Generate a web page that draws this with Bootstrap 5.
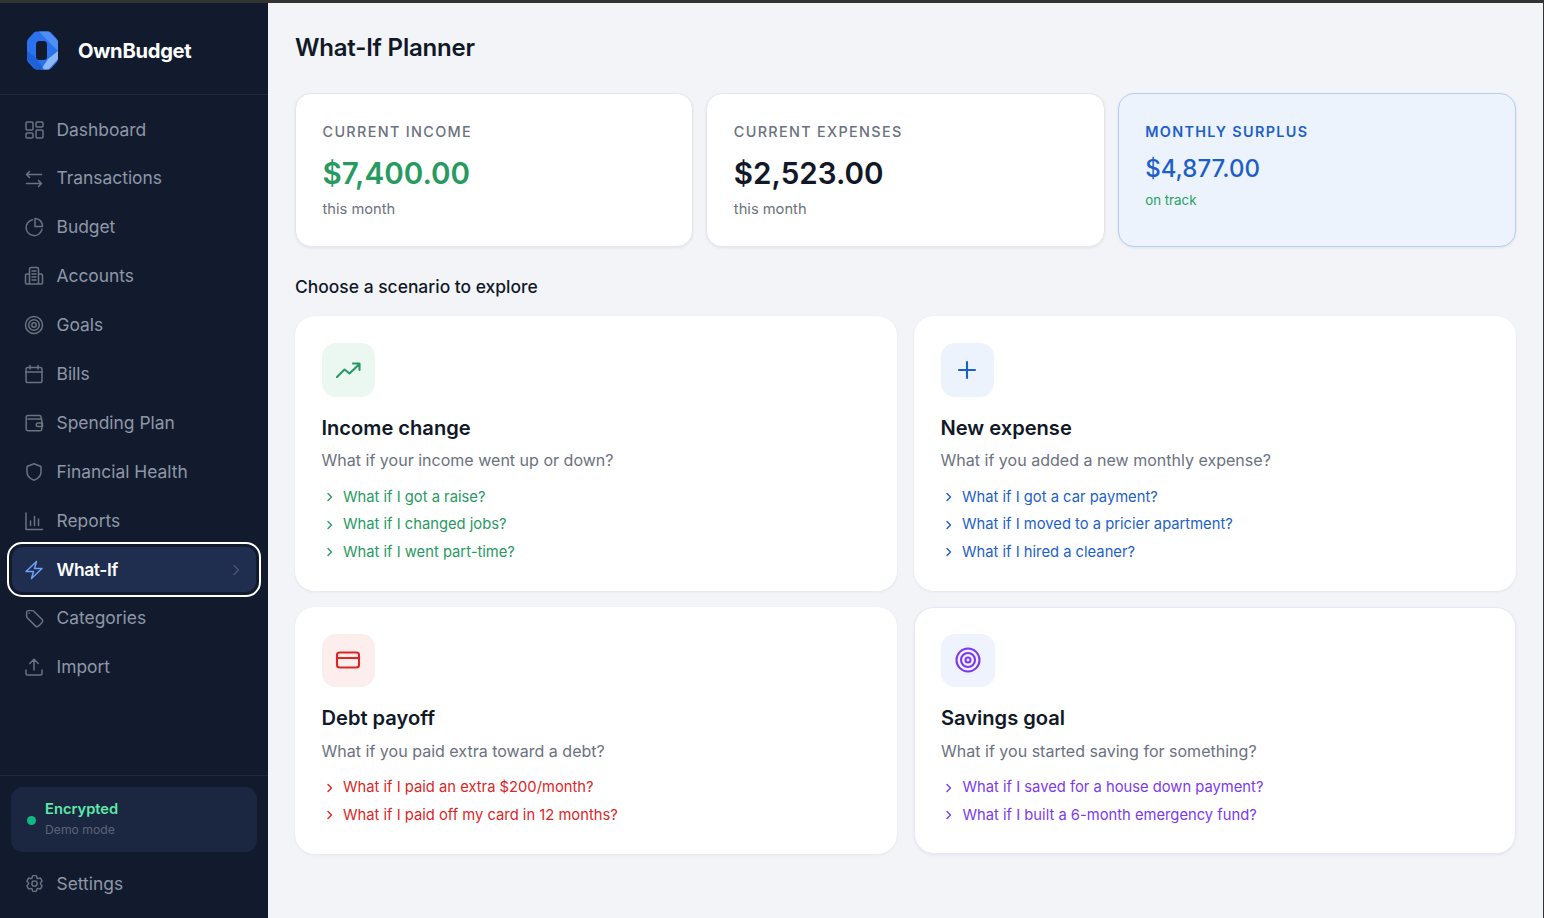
<!DOCTYPE html>
<html lang="en"><head><meta charset="utf-8"><title>What-If Planner</title>
<link href="https://cdn.jsdelivr.net/npm/bootstrap@5.3.0/dist/css/bootstrap.min.css" rel="stylesheet">
<style>
html,body{height:100%;margin:0;overflow:hidden}
body{font-family:Inter,"Liberation Sans",sans-serif;background:#f2f4f8;color:#111827}
.appframe{height:918px;border-top:3px solid #333;border-right:1px solid #333;box-sizing:border-box}
.sidebar{width:268px;background:#121b2e;flex:none;height:915px}
.brandbar{height:91.5px;border-bottom:1px solid #1e2a44;padding:5px 0 0 27px;gap:20px}
.brandname{font-size:20.2px;font-weight:700;color:#fff;letter-spacing:-.3px}
.navwrap{padding-top:10.7px}
.navitem{height:48.9px;padding-left:24px;gap:12.5px;color:#8f97a6;font-size:17.4px;text-decoration:none;border-radius:12px;position:relative}
.navitem svg{width:20px;height:20px;flex:none;stroke:#6b7280;fill:none;stroke-width:1.5;stroke-linecap:round;stroke-linejoin:round}
.navitem svg.hero{stroke-width:1.7;width:21px;height:21px;margin:0 -.5px}
.navactive{margin:-1.05px 9px -1.3px;padding-left:12px;height:51px;background:#1f2d4f;color:#fff;font-weight:600;letter-spacing:-.35px;outline:2.5px solid #fff;border:3px solid #121b2e;border-radius:13px}
.navactive svg.bolt{stroke:#6ea0f5}
.navactive svg.chev{width:14px;height:14px;stroke:#4b5563;margin-left:auto;margin-right:13px}
.sidefoot{border-top:1px solid #1e2a44;padding:11px 11px 10px}
.encbox{height:65px;background:#1b2740;border-radius:12px;padding-left:16px;gap:9px}
.encdot{width:9px;height:9px;border-radius:50%;background:#10b981;margin-top:1px}
.enctitle{font-size:14.7px;font-weight:600;color:#5ee9a8;line-height:20px}
.encsub{font-size:12.2px;color:#5b6478;line-height:20px;margin-top:1px}
.settingsrow{margin:7px -11px 0;}
.mainpane{padding:0 27px;min-width:0}
.pagetitle{font-size:24px;font-weight:600;line-height:32px;margin:29px 0;color:#111827;letter-spacing:-.2px}
.statgrid{display:grid;grid-template-columns:repeat(3,1fr);gap:13px}
.statcard{height:154px;background:#fff;border:1px solid #e5e7eb;border-radius:16px;padding:28px 26.5px 0;box-shadow:0 1px 3px rgba(17,24,39,.08)}
.statlabel{font-size:14.4px;font-weight:500;letter-spacing:1.33px;color:#6b7280;line-height:20px}
.statvalue{font-size:29.6px;font-weight:600;line-height:40px;margin-top:11px}
.statsub{font-size:14.7px;color:#6b7280;line-height:20px;margin-top:6px}
.cardblue{background:#edf3fc;border-color:#b3cdf3}
.cardblue .statlabel{color:#1d5fc9;font-weight:600}
.cardblue .statvalue{color:#1d5fc9;font-size:24px;font-weight:500;line-height:34px;margin-top:10px}
.cardblue .statsub{color:#23a35f;font-size:13.3px;margin-top:4px}
.sectionhead{font-size:17.45px;font-weight:500;color:#111827;line-height:24px;margin:28px 0 17px}
.scengrid{display:grid;grid-template-columns:1fr 1fr;gap:16px 17px}
.scencard{background:#fff;border-radius:20px;padding:27px 26.5px 0;box-shadow:0 1px 3px rgba(17,24,39,.07)}
.sc1{height:274.5px}.sc2{height:247.5px}
.scfocus{border:1px solid #ebe7fb;padding:26px 26px 0}
.icbox{width:53.5px;height:53.5px;border-radius:14px;display:flex;align-items:center;justify-content:center}
.icbox svg{width:26px;height:26px;fill:none;stroke-width:2.1;stroke-linecap:round;stroke-linejoin:round}
.scentitle{font-size:20.1px;font-weight:600;line-height:28px;margin:17.5px 0 5.5px;color:#111827}
.sc2 .scentitle{margin:17px 0 6.5px}
.scendesc{font-size:16.05px;color:#6b7280;line-height:24px;margin-bottom:12px}
.sc2 .scendesc{margin-bottom:11.500px}
.scenlink{font-size:14.75px;line-height:27.6px;gap:7.500px;display:flex;align-items:center;padding-left:2px}
.scenlink svg{width:12px;height:12px;fill:none;stroke:currentColor;stroke-width:1.4;stroke-linecap:round;stroke-linejoin:round;flex:none}
.cgreen{color:#279a62}.cblue{color:#1d5fc9}.cred{color:#dc2626}.cpurple{color:#7c3aed}
</style></head><body>
<div class="appframe d-flex">
<aside class="sidebar d-flex flex-column">
<div class="brandbar d-flex align-items-center">
<svg width="31" height="39" viewBox="0 0 31 39"><path d="M10 .5H21.500Q23 .5 24 1.500L29.500 7.500Q31 9 31 11V28Q31 30 29.500 31.500L24 37.500Q23 38.500 21.500 38.500H10Q8 38.500 7 37.500L1.500 31.500Q0 30 0 28V11Q0 9 1.500 7.500L7 1.500Q8 .5 10 .5Z" fill="#2a72ee"/><path d="M12 .5H21.500L31 10V20L21 10Z" fill="#4f8ff5"/><path d="M31 20V28L21.500 38.500H14L21 28Z" fill="#8ab8fa"/><path d="M0 20V28L9 38.500H17L9 27Z" fill="#1e60d8"/><path d="M20 13 29 20 20 26Z" fill="#2a72ee"/><rect x="9" y="10" width="11" height="19" rx="3.500" fill="#121b2e"/></svg>
<span class="brandname">OwnBudget</span></div>
<nav class="navwrap flex-grow-1 d-flex flex-column">
<a class="navitem d-flex align-items-center" href="#"><svg viewBox="0 0 20 20"><rect x="2" y="2" width="7" height="8" rx="1.2"/><rect x="12" y="2" width="7" height="5" rx="1.2"/><rect x="2" y="13" width="7" height="5" rx="1.2"/><rect x="12" y="10" width="7" height="8" rx="1.2"/></svg>Dashboard</a>
<a class="navitem d-flex align-items-center" href="#"><svg viewBox="0 0 20 20"><path d="M5.500 2.500 2.500 5.500 5.500 8.500M2.500 5.500H17.500M14.500 11.500l3 3-3 3M17.500 14.500H2.500"/></svg>Transactions</a>
<a class="navitem d-flex align-items-center" href="#"><svg viewBox="0 0 20 20"><path d="M8.500 2.800A8 8 0 1 0 18 12.200"/><path d="M11 1.500A7.500 7.500 0 0 1 18.500 9.500H11Z"/></svg>Budget</a>
<a class="navitem d-flex align-items-center" href="#"><svg viewBox="0 0 20 20"><path d="M5.500 18V3a1.500 1.500 0 0 1 1.500-1.500h6A1.500 1.500 0 0 1 14.500 3v15M5.500 8H3a1.500 1.500 0 0 0-1.500 1.500V17A1 1 0 0 0 2.500 18H17.500A1 1 0 0 0 18.500 17V9.500A1.500 1.500 0 0 0 17 8H14.500M8 5h4M8 8h4M8 11h4M8 14h4"/></svg>Accounts</a>
<a class="navitem d-flex align-items-center" href="#"><svg viewBox="0 0 20 20"><circle cx="10" cy="10" r="8.500"/><circle cx="10" cy="10" r="5.300"/><circle cx="10" cy="10" r="2.200"/></svg>Goals</a>
<a class="navitem d-flex align-items-center" href="#"><svg viewBox="0 0 20 20"><rect x="2" y="3.500" width="16" height="15" rx="1.800"/><path d="M2 8H18M6 1.500V5M14 1.500V5"/></svg>Bills</a>
<a class="navitem d-flex align-items-center" href="#"><svg viewBox="0 0 20 20"><path d="M17 5.500V4A1.500 1.500 0 0 0 15.500 2.500H4A1.800 1.800 0 0 0 2.200 4.300V16A1.800 1.800 0 0 0 4 17.800H16A1.800 1.800 0 0 0 17.800 16V6H4"/><path d="M14 10h4.500v3.500H14a1.750 1.750 0 0 1 0-3.500Z"/></svg>Spending Plan</a>
<a class="navitem d-flex align-items-center" href="#"><svg viewBox="0 0 20 20"><path d="M10 1.800 17 4.500V10c0 4.200-3 6.800-7 8.200-4-1.400-7-4-7-8.200V4.500Z"/></svg>Financial Health</a>
<a class="navitem d-flex align-items-center" href="#"><svg viewBox="0 0 20 20"><path d="M2 2V18.500H18.500M6.500 14.500V10M10.500 14.500V5.500M14.500 14.500V8"/></svg>Reports</a>
<a class="navitem navactive d-flex align-items-center" href="#"><svg class="bolt" viewBox="0 0 20 20"><path d="M12.500 1.500 2 11.500H9.500L7.500 18.500 18 8.500H10.500Z"/></svg>What-If<svg class="chev" viewBox="0 0 14 14"><path d="M5 2.500 9.500 7 5 11.500"/></svg></a>
<a class="navitem d-flex align-items-center" href="#"><svg class="hero" viewBox="0 0 24 24"><path d="M9.568 3H5.250A2.250 2.250 0 0 0 3 5.250v4.318c0 .597.237 1.170.659 1.591l9.581 9.581c.699.699 1.780.872 2.607.33a18.095 18.095 0 0 0 5.223-5.223c.542-.827.369-1.908-.33-2.607L11.160 3.660A2.250 2.250 0 0 0 9.568 3Z"/><path d="M6 6h.008v.008H6V6Z"/></svg>Categories</a>
<a class="navitem d-flex align-items-center" href="#"><svg viewBox="0 0 20 20"><path d="M10 13V2.500M5.800 6.500 10 2.300 14.200 6.500M2 13V16.500A1.500 1.500 0 0 0 3.500 18H16.500A1.500 1.500 0 0 0 18 16.500V13"/></svg>Import</a>
</nav>
<div class="sidefoot">
<div class="encbox d-flex align-items-center"><span class="encdot"></span><div><div class="enctitle">Encrypted</div><div class="encsub">Demo mode</div></div></div>
<div class="settingsrow"><a class="navitem d-flex align-items-center" href="#"><svg class="hero" viewBox="0 0 24 24"><path d="M9.594 3.940c.09-.542.56-.94 1.110-.94h2.593c.55 0 1.020.398 1.110.94l.213 1.281c.063.374.313.686.645.870.074.04.147.083.22.127.324.196.72.257 1.075.124l1.217-.456a1.125 1.125 0 0 1 1.370.49l1.296 2.247a1.125 1.125 0 0 1-.26 1.431l-1.003.827c-.293.24-.438.613-.431.992a6.759 6.759 0 0 1 0 .255c-.007.378.138.75.43.99l1.005.828c.424.35.534.954.26 1.430l-1.298 2.247a1.125 1.125 0 0 1-1.369.491l-1.217-.456c-.355-.133-.75-.072-1.076.124a6.570 6.570 0 0 1-.22.128c-.331.183-.581.495-.644.869l-.213 1.280c-.09.543-.56.941-1.110.941h-2.594c-.55 0-1.020-.398-1.110-.94l-.213-1.281c-.062-.374-.312-.686-.644-.87a6.520 6.520 0 0 1-.22-.127c-.325-.196-.72-.257-1.076-.124l-1.217.456a1.125 1.125 0 0 1-1.369-.49l-1.297-2.247a1.125 1.125 0 0 1 .26-1.431l1.004-.827c.292-.24.437-.613.43-.992a6.932 6.932 0 0 1 0-.255c.007-.378-.138-.75-.43-.99l-1.004-.828a1.125 1.125 0 0 1-.26-1.430l1.297-2.247a1.125 1.125 0 0 1 1.370-.491l1.216.456c.356.133.751.072 1.076-.124.072-.044.146-.087.22-.128.332-.183.582-.495.644-.869l.214-1.281Z"/><circle cx="12" cy="12" r="3"/></svg>Settings</a></div>
</div>
</aside>
<main class="mainpane flex-grow-1">
<h1 class="pagetitle">What-If Planner</h1>
<div class="statgrid">
<div class="statcard"><div class="statlabel">CURRENT INCOME</div><div class="statvalue cgreen">$7,400.00</div><div class="statsub">this month</div></div>
<div class="statcard"><div class="statlabel">CURRENT EXPENSES</div><div class="statvalue">$2,523.00</div><div class="statsub">this month</div></div>
<div class="statcard cardblue"><div class="statlabel">MONTHLY SURPLUS</div><div class="statvalue">$4,877.00</div><div class="statsub">on track</div></div>
</div>
<div class="sectionhead">Choose a scenario to explore</div>
<div class="scengrid">
<div class="scencard sc1">
<div class="icbox" style="background:#ebf8f2"><svg viewBox="0 0 26 26" stroke="#279a62"><path d="M2 20 9.500 12.500l5 4L24.500 7M18 6.500h6.500V13"/></svg></div>
<div class="scentitle">Income change</div><div class="scendesc">What if your income went up or down?</div>
<div class="scenlink cgreen"><svg viewBox="0 0 12 12"><path d="M4 2.500 7.500 6 4 9.500"/></svg>What if I got a raise?</div>
<div class="scenlink cgreen"><svg viewBox="0 0 12 12"><path d="M4 2.500 7.500 6 4 9.500"/></svg>What if I changed jobs?</div>
<div class="scenlink cgreen"><svg viewBox="0 0 12 12"><path d="M4 2.500 7.500 6 4 9.500"/></svg>What if I went part-time?</div>
</div>
<div class="scencard sc1">
<div class="icbox" style="background:#edf3fc"><svg viewBox="0 0 26 26" stroke="#1d5fc9"><path d="M13 5V21M5 13H21"/></svg></div>
<div class="scentitle">New expense</div><div class="scendesc">What if you added a new monthly expense?</div>
<div class="scenlink cblue"><svg viewBox="0 0 12 12"><path d="M4 2.500 7.500 6 4 9.500"/></svg>What if I got a car payment?</div>
<div class="scenlink cblue"><svg viewBox="0 0 12 12"><path d="M4 2.500 7.500 6 4 9.500"/></svg>What if I moved to a pricier apartment?</div>
<div class="scenlink cblue"><svg viewBox="0 0 12 12"><path d="M4 2.500 7.500 6 4 9.500"/></svg>What if I hired a cleaner?</div>
</div>
<div class="scencard sc2">
<div class="icbox" style="background:#fdeeee"><svg viewBox="0 0 26 26" stroke="#dc2626"><rect x="2" y="5.500" width="22" height="15" rx="2.500"/><path d="M2 11H24"/></svg></div>
<div class="scentitle">Debt payoff</div><div class="scendesc">What if you paid extra toward a debt?</div>
<div class="scenlink cred"><svg viewBox="0 0 12 12"><path d="M4 2.500 7.500 6 4 9.500"/></svg>What if I paid an extra $200/month?</div>
<div class="scenlink cred"><svg viewBox="0 0 12 12"><path d="M4 2.500 7.500 6 4 9.500"/></svg>What if I paid off my card in 12 months?</div>
</div>
<div class="scencard sc2 scfocus">
<div class="icbox" style="background:#eff3fd"><svg viewBox="0 0 26 26" stroke="#7c3aed"><circle cx="13" cy="13" r="11.500"/><circle cx="13" cy="13" r="7"/><circle cx="13" cy="13" r="2.500"/></svg></div>
<div class="scentitle">Savings goal</div><div class="scendesc">What if you started saving for something?</div>
<div class="scenlink cpurple"><svg viewBox="0 0 12 12"><path d="M4 2.500 7.500 6 4 9.500"/></svg>What if I saved for a house down payment?</div>
<div class="scenlink cpurple"><svg viewBox="0 0 12 12"><path d="M4 2.500 7.500 6 4 9.500"/></svg>What if I built a 6-month emergency fund?</div>
</div>
</div>
</main>
</div>
<script src="https://cdn.jsdelivr.net/npm/bootstrap@5.3.0/dist/js/bootstrap.bundle.min.js"></script>
</body></html>
